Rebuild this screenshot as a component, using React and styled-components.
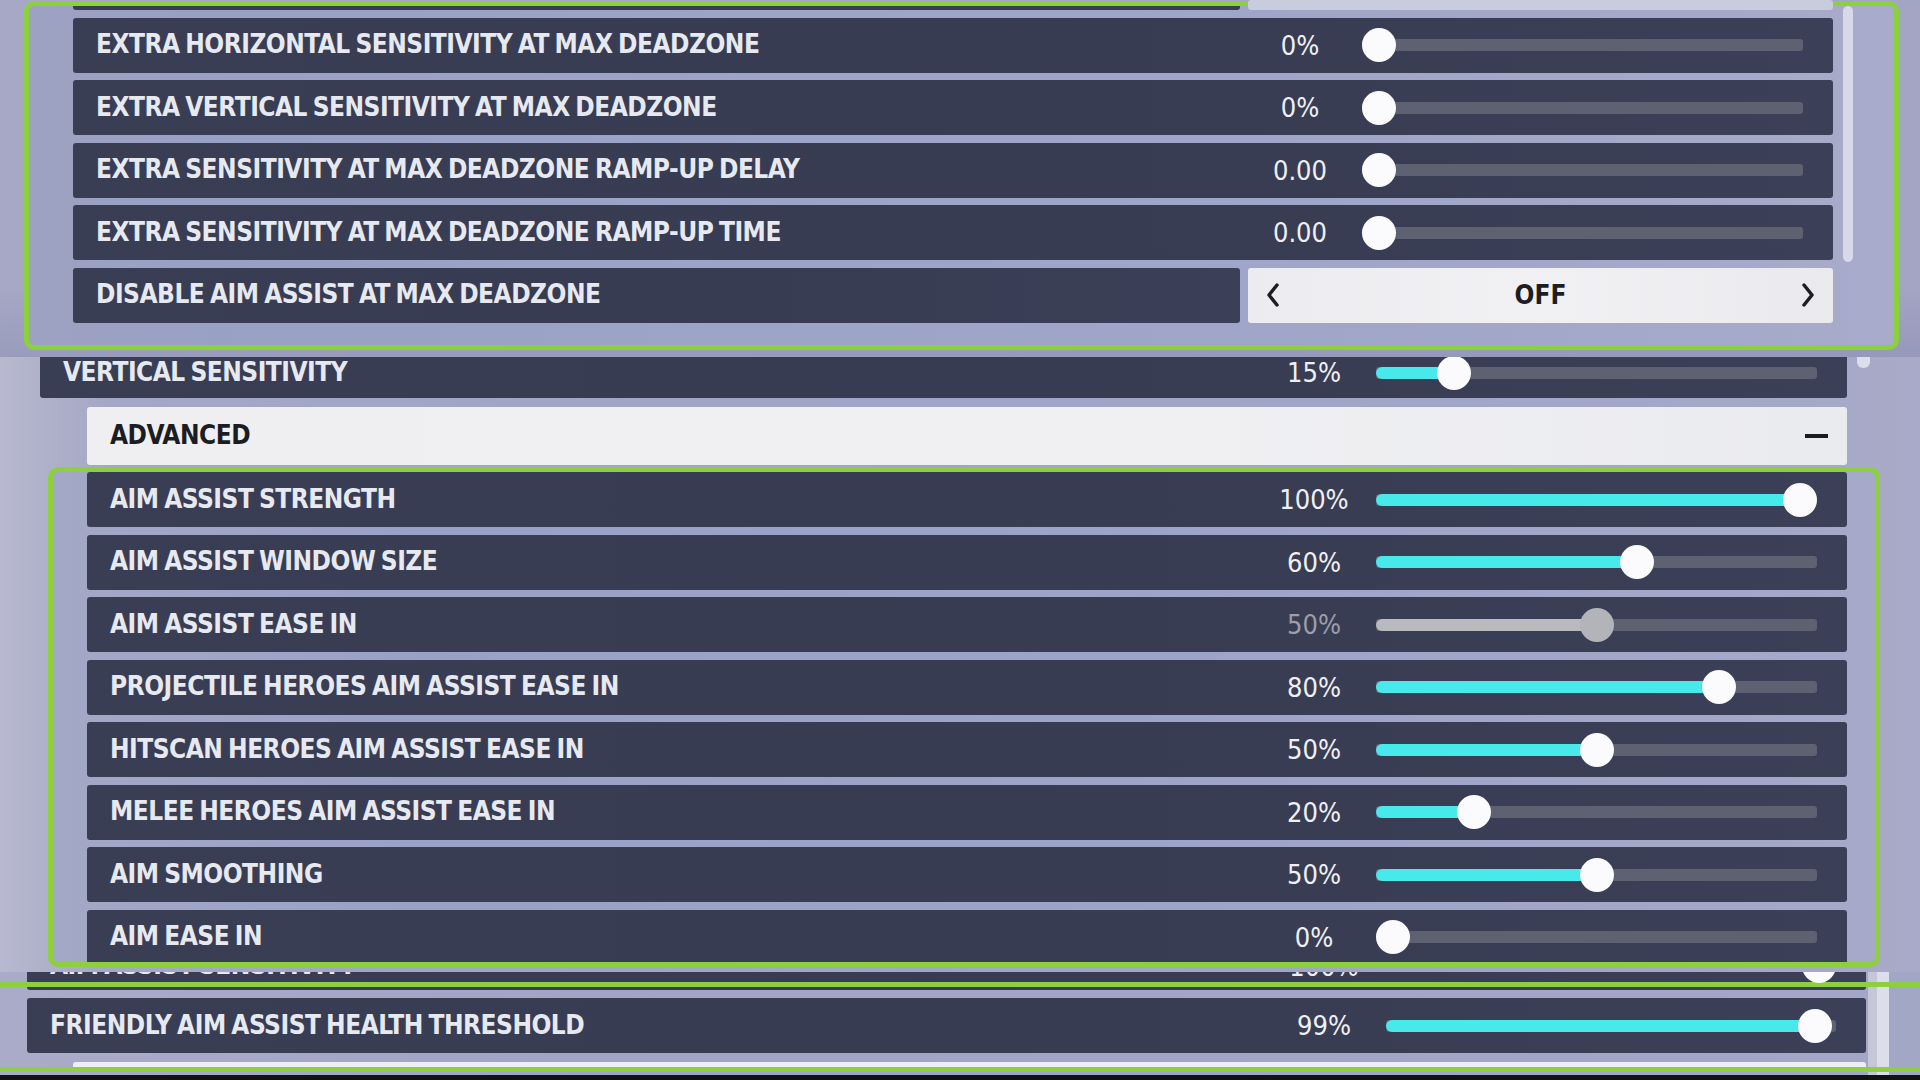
import React from 'react';
import styled, { createGlobalStyle } from 'styled-components';

const GREEN = '#8dd03e';

const GlobalStyle = createGlobalStyle`
  html, body {
    margin: 0;
    padding: 0;
    background: #121216;
  }
  body {
    font-family: "DejaVu Sans Condensed", "DejaVu Sans", sans-serif;
    font-stretch: condensed;
  }
  * {
    box-sizing: border-box;
  }
`;

const topRows = [
  { label: 'EXTRA HORIZONTAL SENSITIVITY AT MAX DEADZONE', value: '0%', level: 0 },
  { label: 'EXTRA VERTICAL SENSITIVITY AT MAX DEADZONE', value: '0%', level: 0 },
  { label: 'EXTRA SENSITIVITY AT MAX DEADZONE RAMP-UP DELAY', value: '0.00', level: 0 },
  { label: 'EXTRA SENSITIVITY AT MAX DEADZONE RAMP-UP TIME', value: '0.00', level: 0 },
];

const advancedRows = [
  { label: 'AIM ASSIST STRENGTH', value: '100%', level: 1 },
  { label: 'AIM ASSIST WINDOW SIZE', value: '60%', level: 0.6 },
  { label: 'AIM ASSIST EASE IN', value: '50%', level: 0.5, muted: true },
  { label: 'PROJECTILE HEROES AIM ASSIST EASE IN', value: '80%', level: 0.8 },
  { label: 'HITSCAN HEROES AIM ASSIST EASE IN', value: '50%', level: 0.5 },
  { label: 'MELEE HEROES AIM ASSIST EASE IN', value: '20%', level: 0.2 },
  { label: 'AIM SMOOTHING', value: '50%', level: 0.5 },
  { label: 'AIM EASE IN', value: '0%', level: 0 },
];

function Slider({ level, muted, width = 441 }) {
  const left = level * (width - 34);
  return (
    <SliderBox $w={width}>
      <Track />
      {level > 0 && <Fill $muted={muted} style={{ width: left + 17 }} />}
      <Thumb $muted={muted} style={{ left }} />
    </SliderBox>
  );
}

function SliderRow({ label, value, level, muted, height, trackWidth }) {
  return (
    <Row $h={height}>
      <Label>{label}</Label>
      <Value $muted={muted}>{value}</Value>
      <Slider level={level} muted={muted} width={trackWidth} />
    </Row>
  );
}

function Chevron({ flip }) {
  return (
    <svg width="14" height="24" viewBox="0 0 14 24">
      <polyline
        points={flip ? '3,2 11,12 3,22' : '11,2 3,12 11,22'}
        fill="none"
        stroke="#1d1d22"
        strokeWidth="3.5"
        strokeLinecap="round"
        strokeLinejoin="round"
      />
    </svg>
  );
}

function App() {
  return (
    <Screen>
      <GlobalStyle />

      <TopShot>
        <Frame>
          <List>
            <SplitRow $peek>
              <PeekDark />
              <Selector $peek />
            </SplitRow>
            {topRows.map((r) => (
              <SliderRow key={r.label} {...r} />
            ))}
            <SplitRow>
              <Row>
                <Label>DISABLE AIM ASSIST AT MAX DEADZONE</Label>
              </Row>
              <Selector>
                <Chevron />
                <SelectorText>OFF</SelectorText>
                <Chevron flip />
              </Selector>
            </SplitRow>
          </List>
          <ScrollBar />
        </Frame>
      </TopShot>

      <MidShot>
        <TopStrip>
          <CutRow>
            <SliderRow label="VERTICAL SENSITIVITY" value="15%" level={0.15} height={51} />
          </CutRow>
          <ScrollKnob />
        </TopStrip>
        <Header>
          <Label $dark>ADVANCED</Label>
          <Minus />
        </Header>
        <GreenBox>
          {advancedRows.map((r) => (
            <SliderRow key={r.label} {...r} />
          ))}
        </GreenBox>
      </MidShot>

      <BottomShot>
        <PeekRow>
          <SliderRow label="AIM ASSIST SENSITIVITY" value="100%" level={1} height={48} trackWidth={450} />
        </PeekRow>
        <LineFrame>
          <WideRow>
            <SliderRow label="FRIENDLY AIM ASSIST HEALTH THRESHOLD" value="99%" level={0.99} trackWidth={450} />
          </WideRow>
          <NextStrip />
        </LineFrame>
      </BottomShot>
    </Screen>
  );
}

export default App;

const Screen = styled.div`
  width: 1920px;
  height: 1080px;
  overflow: hidden;
  display: flex;
  flex-direction: column;
  background: #121216;
`;

/* ---------- top screenshot ---------- */

const TopShot = styled.section`
  height: 357px;
  flex-shrink: 0;
  overflow: hidden;
  padding: 1px 21px 0 24px;
  background: linear-gradient(180deg, rgba(0, 0, 0, 0) 80%, rgba(60, 66, 110, 0.12) 100%),
    linear-gradient(90deg, #a6a8c6 0%, #a2a5c4 100%);
`;

const Frame = styled.div`
  height: 349px;
  display: flex;
  border: 5px solid ${GREEN};
  border-radius: 10px;
  padding: 0 41px 0 44px;
  background: linear-gradient(90deg, #9ea2c2 0%, #98a0c4 10%, #9ca4c8 40%, #a0a6c8 70%, #a8abca 100%);
`;

const List = styled.div`
  flex: 1;
  display: flex;
  flex-direction: column;
  gap: 7.5px;
`;

const ScrollBar = styled.div`
  width: 10px;
  height: 256px;
  margin-left: 10px;
  border-radius: 5px;
  background: #d7d9e8;
  flex-shrink: 0;
`;

const SplitRow = styled.div`
  display: flex;
  gap: 8px;
  flex-shrink: 0;
  height: ${(p) => (p.$peek ? '10px' : '55px')};
  margin-top: ${(p) => (p.$peek ? '-6px' : '0')};
  align-items: ${(p) => (p.$peek ? 'flex-end' : 'stretch')};

  & > div:first-child {
    flex: 1;
  }
`;

const PeekDark = styled.div`
  height: 4px;
  background: #393d53;
  border-radius: 0 0 3px 3px;
`;

const Selector = styled.div`
  width: 585px;
  height: ${(p) => (p.$peek ? '10px' : '55px')};
  flex-shrink: 0;
  display: flex;
  align-items: center;
  justify-content: space-between;
  padding: 0 18px;
  border-radius: 3px;
  background: ${(p) => (p.$peek ? '#c9ccdc' : 'linear-gradient(90deg, #ececf0 0%, #f1f1f4 50%, #eaeaee 100%)')};
`;

const SelectorText = styled.span`
  font-size: 26px;
  font-weight: 700;
  color: #1d1d22;
  line-height: 1.1;
`;

/* ---------- shared rows ---------- */

const Row = styled.div`
  height: ${(p) => p.$h || 55}px;
  flex-shrink: 0;
  display: flex;
  align-items: center;
  padding-right: 30px;
  border-radius: 3px;
  background: linear-gradient(90deg, #3a3e55 0%, #373c52 45%, #393d54 70%, #3b3f57 100%);
`;

const Label = styled.span`
  flex: 1;
  padding-left: 23px;
  font-size: 26px;
  font-weight: 700;
  letter-spacing: -0.5px;
  word-spacing: -2px;
  line-height: 1.05;
  white-space: nowrap;
  color: ${(p) => (p.$dark ? '#1c1d22' : '#e7e9f0')};
`;

const Value = styled.span`
  width: 100px;
  margin-right: 12px;
  flex-shrink: 0;
  text-align: center;
  font-size: 27px;
  font-weight: 400;
  line-height: 1;
  color: ${(p) => (p.$muted ? '#9c9ea9' : '#eef0f4')};
`;

const SliderBox = styled.div`
  position: relative;
  width: ${(p) => p.$w}px;
  height: 34px;
  flex-shrink: 0;
  display: flex;
  align-items: center;
`;

const Track = styled.div`
  width: 100%;
  height: 12px;
  border-radius: 3px;
  background: #5e6171;
`;

const Fill = styled.div`
  position: absolute;
  left: 0;
  top: 11px;
  height: 12px;
  border-radius: 6px 0 0 6px;
  background: ${(p) => (p.$muted ? '#b8babe' : '#48e9ea')};
`;

const Thumb = styled.div`
  position: absolute;
  top: 0;
  width: 34px;
  height: 34px;
  border-radius: 50%;
  background: ${(p) => (p.$muted ? '#b2b4b9' : '#fbfbfd')};
`;

/* ---------- middle screenshot ---------- */

const MidShot = styled.section`
  height: 615px;
  flex-shrink: 0;
  overflow: hidden;
  display: flex;
  flex-direction: column;
  background: linear-gradient(90deg, #b8b9d0 0px, #b0b2cb 40px, #a4a7c5 110px, #9fa5c6 50%, #a4a7c6 90%, #a8aac8 100%);
`;

const TopStrip = styled.div`
  height: 41px;
  flex-shrink: 0;
  display: flex;
  align-items: flex-start;
  padding-left: 40px;
`;

const CutRow = styled.div`
  width: 1807px;
  margin-top: -10px;
  flex-shrink: 0;
`;

const ScrollKnob = styled.div`
  width: 13px;
  height: 11px;
  margin-left: 10px;
  border-radius: 0 0 6px 6px;
  background: #dcdeea;
`;

const Header = styled.div`
  width: 1760px;
  height: 58px;
  margin: 9px 0 0 87px;
  flex-shrink: 0;
  display: flex;
  align-items: center;
  padding-right: 19px;
  border-radius: 3px;
  background: linear-gradient(90deg, #efeff2 0%, #f0f0f3 60%, #eaebef 100%);
`;

const Minus = styled.span`
  width: 23px;
  height: 4px;
  background: #1b1b20;
`;

const GreenBox = styled.div`
  width: 1832px;
  height: 500px;
  margin: 2px 0 0 48px;
  flex-shrink: 0;
  overflow: hidden;
  display: flex;
  flex-direction: column;
  gap: 7.5px;
  padding-left: 34px;
  border: 5px solid ${GREEN};
  border-radius: 10px;
  background: linear-gradient(90deg, #a4a8c6 0%, #99a1c6 20%, #9ca4c8 60%, #a6a9c8 100%);

  & > div {
    width: 1760px;
  }
`;

/* ---------- bottom screenshot ---------- */

const BottomShot = styled.section`
  height: 103px;
  flex-shrink: 0;
  overflow: hidden;
  display: flex;
  flex-direction: column;
  background: linear-gradient(90deg, transparent 1868px, #c5c7d9 1868px, #c5c7d9 1877px, #dcdeea 1877px, #dcdeea 1889px, transparent 1889px),
    linear-gradient(90deg, #a9abc8 0%, #a0a5c6 30%, #a3a7c6 100%);
`;

const PeekRow = styled.div`
  width: 1839px;
  margin: -30px 0 0 27px;
  flex-shrink: 0;
`;

const LineFrame = styled.div`
  margin-top: -8px;
  flex-shrink: 0;
  display: flex;
  flex-direction: column;
  gap: 9px;
  padding-top: 11px;
  border-top: 5px solid ${GREEN};
  border-bottom: 5px solid ${GREEN};
`;

const WideRow = styled.div`
  width: 1839px;
  margin-left: 27px;
`;

const NextStrip = styled.div`
  width: 1793px;
  height: 5px;
  margin-left: 73px;
  border-radius: 3px 3px 0 0;
  background: #eceef4;
`;
